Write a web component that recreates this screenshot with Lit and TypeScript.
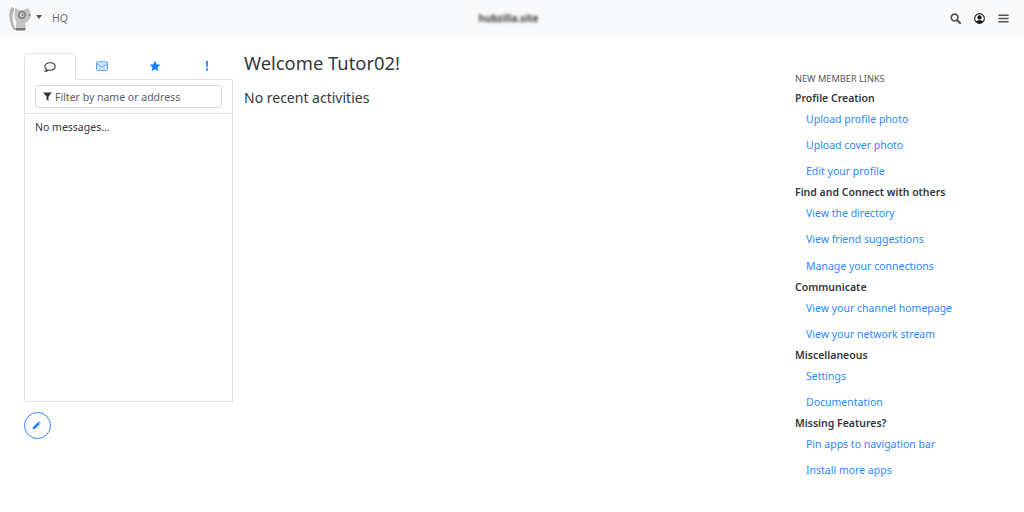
import { LitElement, html, css } from "lit";
import { customElement } from "lit/decorators.js";

const groups: [string, string[]][] = [
  ["Profile Creation", ["Upload profile photo", "Upload cover photo", "Edit your profile"]],
  ["Find and Connect with others", ["View the directory", "View friend suggestions", "Manage your connections"]],
  ["Communicate", ["View your channel homepage", "View your network stream"]],
  ["Miscellaneous", ["Settings", "Documentation"]],
  ["Missing Features?", ["Pin apps to navigation bar", "Install more apps"]],
];

@customElement("app-root")
export class AppRoot extends LitElement {
  static styles = css`
    :host { display: block; width: 1024px; height: 512px; overflow: hidden; background: #fff; color: #33383d;
      font-family: "Noto Sans", sans-serif; font-size: 10.5px; line-height: 15.75px; }
    .nav { height: 37px; background: #f8f9fa; display: flex; align-items: center; padding: 0 15px 0 9px; color: #707070; }
    .logo { width: 25px; height: 25px; display: block; flex: none; }
    .caret { width: 0; height: 0; border: 3.5px solid transparent; border-top: 4px solid #555; border-bottom: 0; margin: 0 0 3px 2px; }
    .hq { margin-left: 10px; }
    .mid { flex: 1; display: flex; justify-content: center; padding-right: 9px; }
    .blur { filter: blur(1.4px); color: #3c3c3c; font-size: 10px; font-weight: 700; padding-left: 8px; }
    .icons { display: flex; gap: 13px; align-items: center; }
    .icons svg { display: block; width: 11px; height: 11px; }
    .main { display: grid; grid-template-columns: 209px 1fr 229px; column-gap: 11px; padding: 16px 0 0 24px; }
    .tabs { display: flex; height: 27px; }
    .tab { width: 52.25px; display: flex; align-items: center; justify-content: center; border-bottom: 1px solid #e2e5e9; box-sizing: border-box; color: #1a7fff; }
    .tab.on { border: 1px solid #e2e5e9; border-bottom: 0; border-radius: 5px 5px 0 0; color: #33383d; }
    .tab svg { width: 12px; height: 12px; display: block; }
    .panel { border: 1px solid #e2e5e9; border-top: 0; height: 322px; box-sizing: border-box; }
    .filterwrap { padding: 5px 10px; height: 34px; box-sizing: border-box; border-bottom: 1px solid #e2e5e9; }
    .filter { height: 23px; box-sizing: border-box; border: 1px solid #d8dce0; border-radius: 3px; display: flex; align-items: center; padding: 2px 0 0 7px; gap: 3px; color: #5a6168; }
    .filter svg { width: 9px; height: 9px; margin-top: -2px; }
    .msg { padding: 6px 10px; }
    .pen { width: 27px; height: 27px; box-sizing: border-box; border: 1px solid #2a8bff; border-radius: 50%; margin-top: 10px; display: flex; align-items: center; justify-content: center; padding-right: 2px; color: #1a7fff; }
    .pen svg { width: 9px; height: 9px; }
    h1 { font-size: 18.375px; font-weight: 400; line-height: 22px; margin: -1px 0 0; }
    h2 { font-size: 14px; font-weight: 400; line-height: 17px; margin: 15px 0 0; }
    .title { font-size: 9.2px; line-height: 14px; margin: 19px 0 4.6px; text-transform: uppercase; color: #555a60; }
    .gh { font-weight: 600; }
    .link { display: block; color: #2b88ff; padding: 5.25px 0 5.25px 11px; text-decoration: none; }
  `;

  render() {
    return html`
      <div class="nav">
        <svg class="logo" viewBox="0 0 25 25">
          <g style="filter:blur(.35px)">
            <path d="M3 1 C0 4 0 10 1 15 C2 19 3 22 5 24 L7 24 C5 20 3.500 16 3.500 11 C3.500 7 5 5 5.500 3 Z" fill="#b5b5b5"/>
            <path d="M6 1.500 L9.500 4 L15 4 L19 2 L21 5 L21.500 10 C21.500 13 19 16 16 17 L17 23 L6.500 23 L7.500 16 C5.500 13 5 9 6 6 Z" fill="#c4c4c4"/>
            <circle cx="13" cy="9" r="4.300" fill="#8a8a8a"/>
            <circle cx="13" cy="9" r="2" fill="#e8e8e8"/>
            <circle cx="13.500" cy="9" r=".9" fill="#555"/>
            <circle cx="20.500" cy="9" r="1.500" fill="#9a9a9a"/>
            <rect x="6.500" y="22" width="10" height="2.500" rx="1" fill="#777"/>
          </g>
        </svg>
        <span class="caret"></span>
        <span class="hq">HQ</span>
        <div class="mid"><span class="blur">hubzilla.site</span></div>
        <div class="icons">
          <svg viewBox="0 0 12 12"><circle cx="5" cy="5" r="3.700" fill="none" stroke="#555" stroke-width="1.800"/><path d="M7.700 7.700 L11 11" stroke="#555" stroke-width="2.200" stroke-linecap="round"/></svg>
          <svg viewBox="0 0 12 12"><circle cx="6" cy="6" r="5.300" fill="none" stroke="#222" stroke-width="1.200"/><circle cx="6" cy="4.800" r="2.300" fill="#111"/><path d="M2.200 9.600 C3 7.400 9 7.400 9.800 9.600 C8 11.600 4 11.600 2.200 9.600Z" fill="#111"/></svg>
          <svg viewBox="0 0 12 12"><path d="M.5 2.500 H11.500 M.5 6 H11.500 M.5 9.500 H11.500" stroke="#555" stroke-width="1.500"/></svg>
        </div>
      </div>
      <div class="main">
        <div>
          <div class="tabs">
            <div class="tab on"><svg viewBox="0 0 12 12"><path d="M6 1.800 C9 1.800 11.200 3.400 11.200 5.500 C11.200 7.600 9 9.200 6 9.200 C5.400 9.200 4.900 9.100 4.400 9 C3.600 9.800 2.600 10.200 1.400 10.200 C2.200 9.500 2.500 8.800 2.500 8.100 C1.400 7.400 .8 6.500 .8 5.500 C.8 3.400 3 1.800 6 1.800Z" fill="none" stroke="currentColor" stroke-width="1.100"/></svg></div>
            <div class="tab"><svg viewBox="0 0 12 12"><rect x=".5" y="1.800" width="11" height="8.600" rx="1" fill="#d2e5ff" stroke="#4d9bff" stroke-width=".9"/><path d="M.8 3.800 L6 7.400 L11.200 3.800" fill="none" stroke="#4d9bff" stroke-width=".9"/></svg></div>
            <div class="tab"><svg viewBox="0 0 12 12"><path d="M6 .8 L7.600 4.200 L11.400 4.700 L8.600 7.300 L9.300 11 L6 9.200 L2.700 11 L3.400 7.300 L.6 4.700 L4.400 4.200Z" fill="currentColor"/></svg></div>
            <div class="tab"><svg viewBox="0 0 12 12"><path d="M5 1 H7 L6.700 7.500 H5.300Z M5 8.600 H7 V10.600 H5Z" fill="currentColor"/></svg></div>
          </div>
          <div class="panel">
            <div class="filterwrap"><div class="filter"><svg viewBox="0 0 9 9"><path d="M0 .5 H9 L5.500 4.500 V9 L3.500 7.500 V4.500Z" fill="#333"/></svg>Filter by name or address</div></div>
            <div class="msg">No messages...</div>
          </div>
          <div class="pen"><svg viewBox="0 0 10 10"><path d="M1 7 L6.500 1.500 L8.500 3.500 L3 9 L.8 9.200Z M7.200 .8 C7.600 .4 8 .4 8.400 .8 L9.200 1.600 C9.600 2 9.600 2.400 9.200 2.800 L9 3 L7 1Z" fill="currentColor"/></svg></div>
        </div>
        <div>
          <h1>Welcome Tutor02!</h1>
          <h2>No recent activities</h2>
        </div>
        <div class="side">
          <div class="title">New Member Links</div>
          ${groups.map(([g, ls]) => html`<div class="gh">${g}</div>${ls.map((l) => html`<a class="link">${l}</a>`)}`)}
        </div>
      </div>
    `;
  }
}
